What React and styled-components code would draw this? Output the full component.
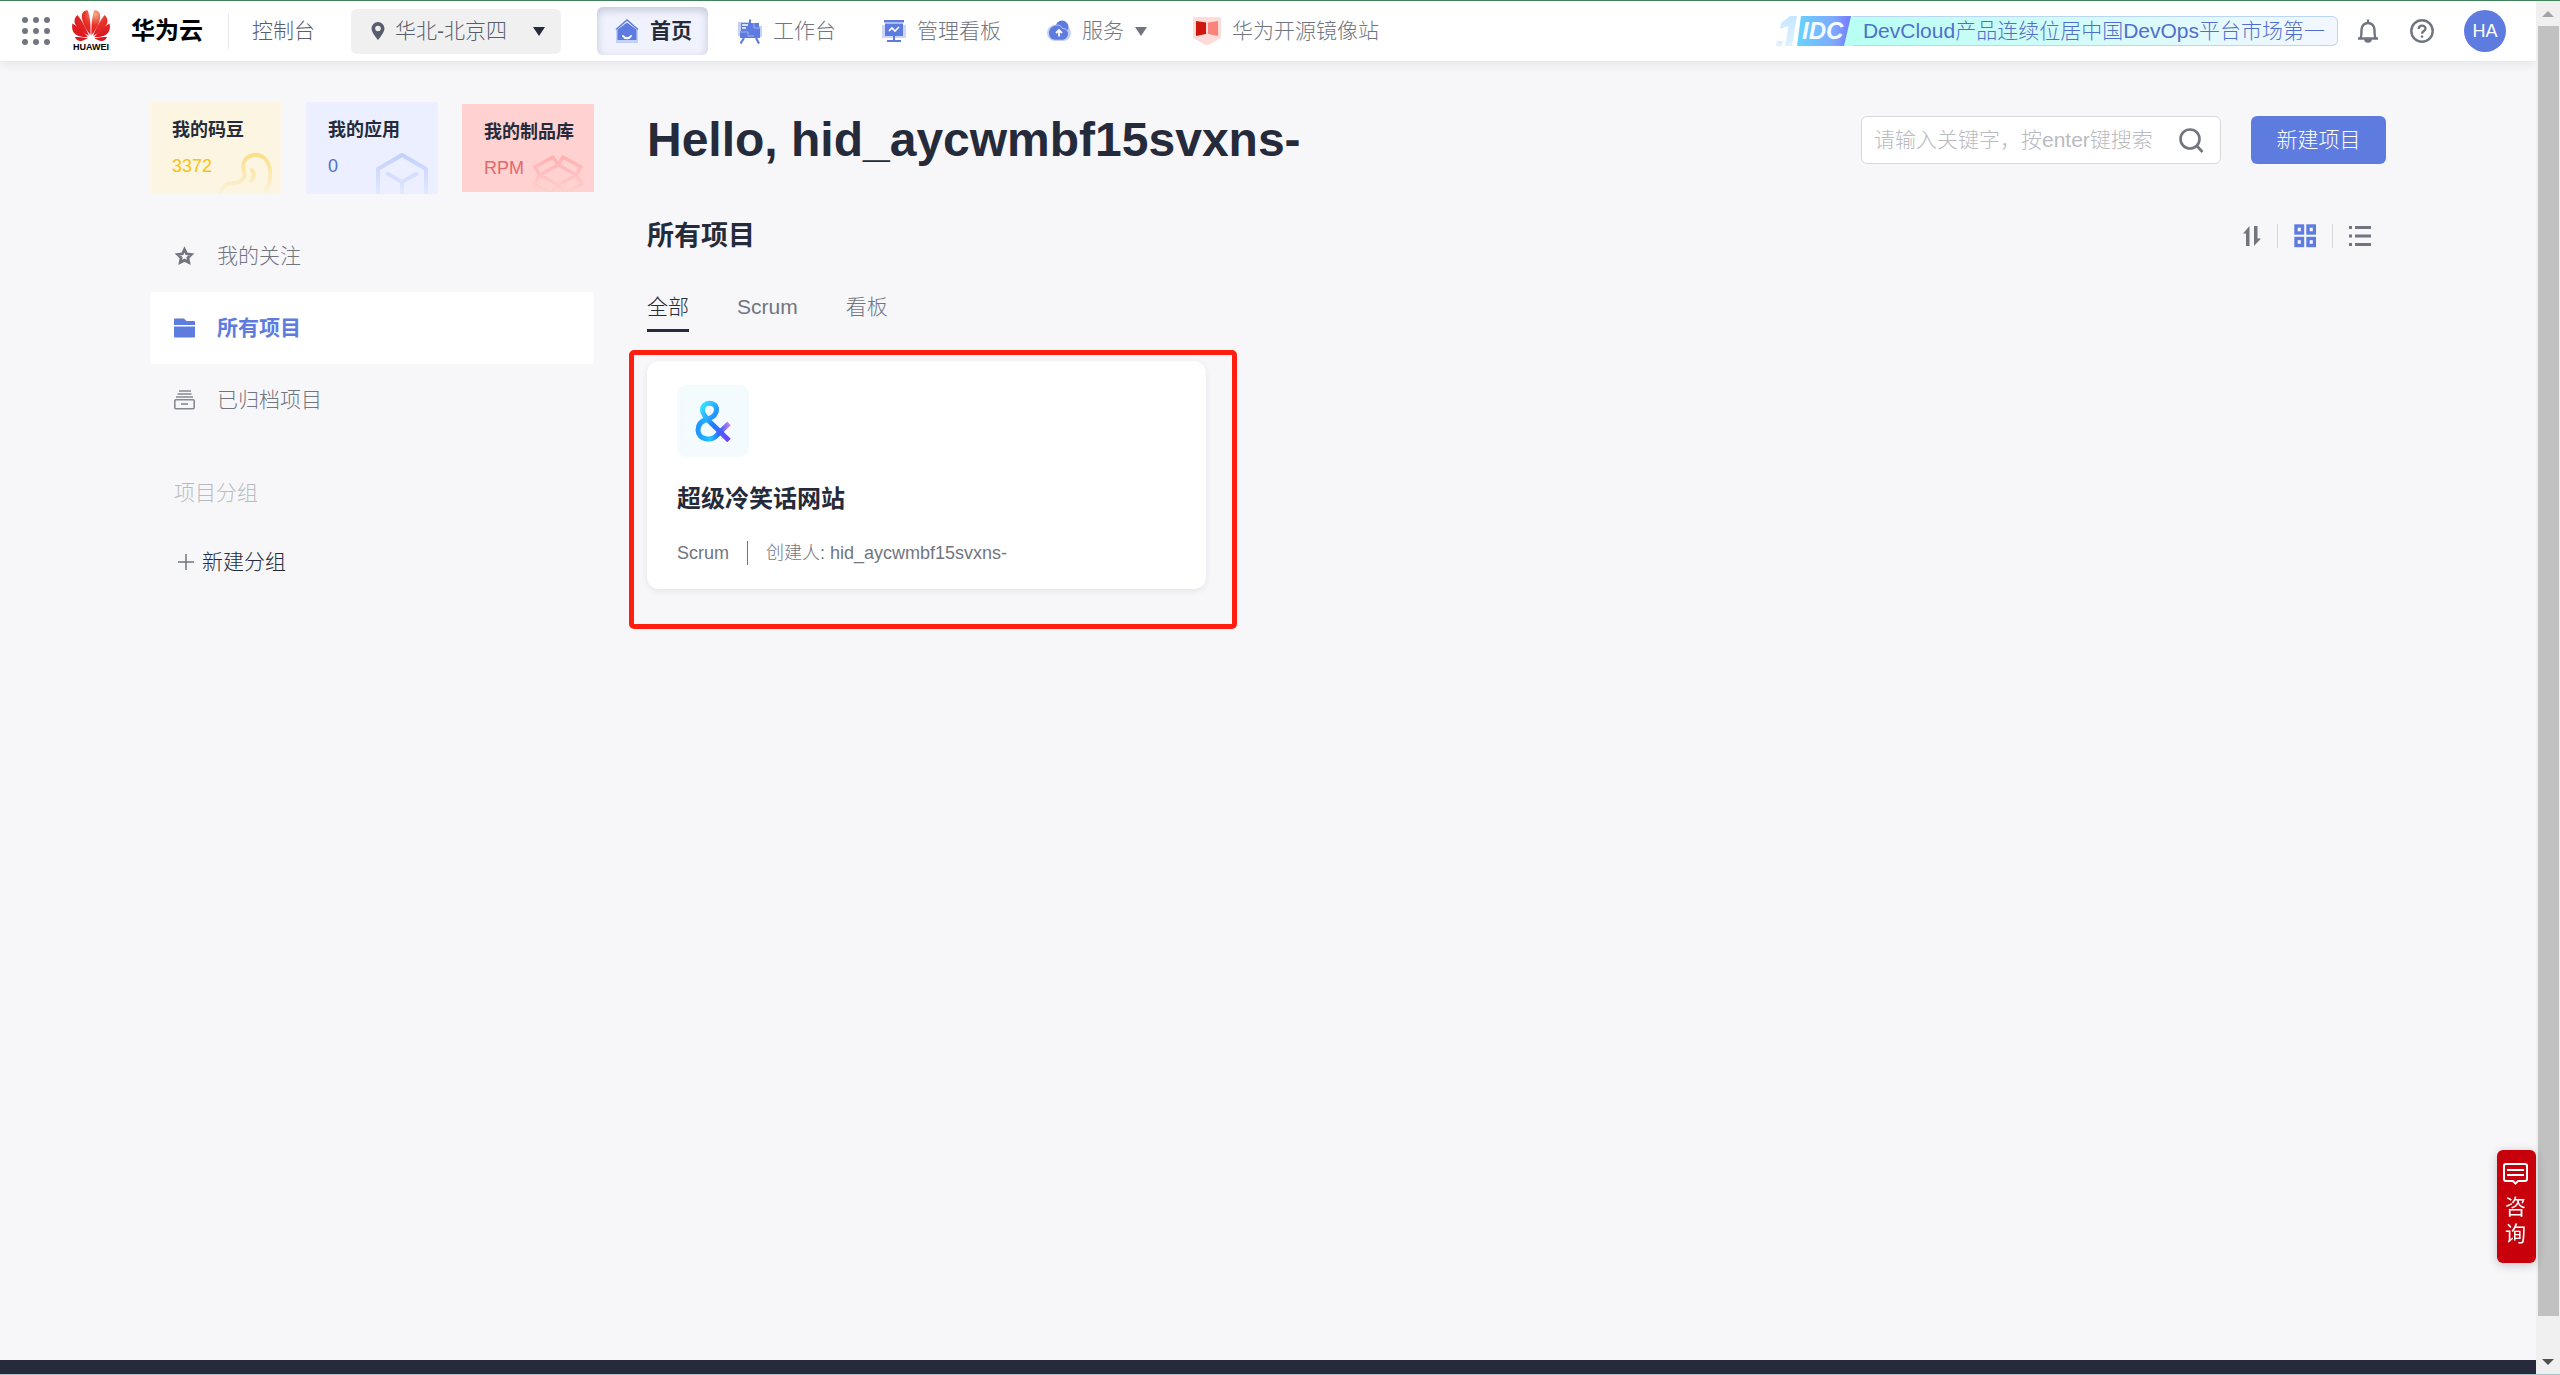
import React from "react";
import styled, { createGlobalStyle, css } from "styled-components";

const Global = createGlobalStyle`
  *, *::before, *::after { box-sizing: border-box; }
  body {
    margin: 0;
    background: #f7f7fa;
    color: #252b3a;
    font-family: "Liberation Sans", "Noto Sans CJK SC", sans-serif;
    font-size: 21px;
    font-weight: 300;
    line-height: 30px;
  }
  button, input, select { font: inherit; color: inherit; margin: 0; }
  button { border: 0; padding: 0; background: none; cursor: pointer; }
  a { color: inherit; text-decoration: none; }
  h1, h2, h3, p { margin: 0; }
  svg { display: block; flex: none; }
`;

const Shell = styled.div`
  display: flex;
  min-height: 100vh;
  border-top: 1px solid #43845c;
  border-bottom: 1px solid #a9c3c9;
`;

const Page = styled.div`
  flex: 1;
  min-width: 0;
  display: flex;
  flex-direction: column;
`;

const Footer = styled.footer`
  height: 14px;
  background: #252b3a;
`;

/* ---------- window scroll bar ---------- */
const Scrollbar = styled.div`
  width: 24px;
  display: flex;
  flex-direction: column;
  align-items: center;
  padding: 10px 0 9px;
  background: #f0f0f0;
`;
const Thumb = styled.div`
  width: 21px;
  flex: 1;
  margin: 9px 0 43px;
  background: #c1c1c1;
`;

/* ---------- top bar ---------- */
const TopBar = styled.header`
  height: 60px;
  display: flex;
  align-items: center;
  padding: 0 30px 0 22px;
  background: #fff;
  color: #71757f;
  box-shadow: 0 3px 10px rgba(37, 43, 58, 0.09);
`;
const IconButton = styled.button`
  display: flex;
  color: ${(p) => p.$color || "#71757f"};
`;
const Brand = styled.a`
  display: flex;
  align-items: center;
  gap: 20px;
  margin-left: 21px;
  padding-right: 25px;
  border-right: 1px solid #ebebeb;
  height: 36px;
  color: #000;
  font-size: 24px;
  font-weight: 700;
`;
const ConsoleLink = styled.a`
  margin: 0 36px 0 23px;
  color: #575d6c;
`;
const Region = styled.label`
  height: 45px;
  width: 210px;
  display: flex;
  align-items: center;
  gap: 10px;
  padding: 0 16px 0 20px;
  border-radius: 6px;
  background: #f0f0f1;
  color: #575d6c;
`;
const RegionSelect = styled.select`
  flex: 1;
  min-width: 0;
  appearance: none;
  border: 0;
  padding: 0;
  background: none;
  outline: 0;
`;
const Nav = styled.nav`
  display: flex;
  align-items: center;
  gap: 12px;
  margin-left: 36px;
`;
const NavItem = styled.a`
  height: 48px;
  display: flex;
  align-items: center;
  gap: 11px;
  padding: 0 16px 0 18px;
  border-radius: 6px;
  ${(p) =>
    p.$active &&
    css`
      background: #f0f3fd;
      box-shadow: inset 0 3px 9px rgba(60, 75, 110, 0.26);
      color: #252b3a;
      font-weight: 700;
    `}
`;
const Tools = styled.div`
  margin-left: auto;
  display: flex;
  align-items: center;
  gap: 30px;
`;
const Award = styled.a`
  display: flex;
  align-items: center;
  height: 30px;
  margin-right: -12px;
  color: #526ecc;
`;
const AwardText = styled.span`
  height: 30px;
  padding: 0 12px 0 10px;
  border: 1px solid #b9d6f2;
  border-left: 0;
  border-radius: 0 6px 6px 0;
  background: linear-gradient(90deg, #b8fff4, #f3f7ff);
  line-height: 28px;
  white-space: nowrap;
`;
const Avatar = styled.button`
  width: 42px;
  height: 42px;
  border-radius: 50%;
  background: #5e7ce0;
  color: #fff;
  font-size: 18px;
  text-align: center;
`;

/* ---------- body ---------- */
const Body = styled.div`
  flex: 1;
  display: flex;
  align-items: flex-start;
  gap: 53px;
  padding: 41px 150px 0;
`;
const Side = styled.aside`
  width: 444px;
  flex: none;
`;
const Stats = styled.div`
  display: flex;
  align-items: center;
  gap: 24px;
`;
const Stat = styled.a`
  flex: 1;
  height: ${(p) => p.$height}px;
  display: grid;
  grid-template-columns: auto 1fr;
  grid-template-rows: auto auto;
  align-content: start;
  row-gap: 10px;
  padding: 15px 0 0 22px;
  background: ${(p) => p.$bg};
  color: ${(p) => p.$color};
  font-size: 18px;
  line-height: 26px;
  overflow: hidden;
`;
const StatName = styled.span`
  grid-column: 1 / 3;
  color: #252b3a;
  font-weight: 700;
  white-space: nowrap;
`;
const StatArt = styled.span`
  justify-self: end;
  height: 26px;
  margin-right: 10px;
`;
const Menu = styled.nav`
  margin-top: 26px;
`;
const MenuItem = styled.a`
  height: 72px;
  display: flex;
  align-items: center;
  gap: 22px;
  padding-left: 24px;
  border-radius: 3px;
  color: #71757f;
  ${(p) =>
    p.$active &&
    css`
      background: #fff;
      color: #5e7ce0;
      font-weight: 700;
    `}
`;
const GroupTitle = styled.p`
  margin: 42px 0 0 24px;
  color: #babbc0;
`;
const AddGroup = styled.button`
  display: flex;
  align-items: center;
  gap: 8px;
  margin: 39px 0 0 28px;
`;

const Main = styled.main`
  flex: 1;
  min-width: 0;
  padding-top: 2px;
`;
const Row = styled.div`
  display: flex;
  align-items: center;
  justify-content: space-between;
`;
const Hello = styled.h1`
  font-size: 48px;
  line-height: 72px;
  font-weight: 700;
`;
const Actions = styled.div`
  display: flex;
  gap: 30px;
`;
const Search = styled.form`
  width: 360px;
  height: 48px;
  display: flex;
  align-items: center;
  padding: 0 16px 0 12px;
  border: 1px solid #d7d8da;
  border-radius: 6px;
  background: #fff;
`;
const SearchInput = styled.input`
  flex: 1;
  min-width: 0;
  border: 0;
  padding: 0;
  outline: 0;
  background: none;
  &::placeholder { color: #babbc0; opacity: 1; }
`;
const Primary = styled.button`
  width: 135px;
  height: 48px;
  border-radius: 6px;
  background: #5e7ce0;
  color: #fff;
`;
const Section = styled(Row)`
  margin-top: 40px;
`;
const SectionTitle = styled.h2`
  font-size: 27px;
  line-height: 40px;
  font-weight: 700;
`;
const Views = styled.div`
  display: flex;
  align-items: center;
  padding-right: 15px;
`;
const ViewButton = styled(IconButton)`
  height: 24px;
  align-items: center;
  & + & {
    margin-left: 16px;
    padding-left: 16px;
    border-left: 1px solid #d7d8da;
  }
`;
const Tabs = styled.div`
  display: flex;
  gap: 48px;
  margin-top: 34px;
`;
const Tab = styled.button`
  height: 42px;
  padding-bottom: 5px;
  border-bottom: 3px solid ${(p) => (p.$active ? "#252b3a" : "transparent")};
  color: ${(p) => (p.$active ? "#252b3a" : "#71757f")};
`;
const Cards = styled.div`
  display: grid;
  grid-template-columns: repeat(3, 1fr);
  gap: 31px;
  margin-top: 29px;
`;
const Highlighted = styled.div`
  position: relative;
`;
const Marker = styled.div`
  position: absolute;
  inset: -11px -31px -40px -18px;
  border: 5px solid #ff1e10;
  border-radius: 5px;
  pointer-events: none;
`;
const Card = styled.a`
  display: block;
  padding: 24px 30px;
  border-radius: 12px;
  background: #fff;
  box-shadow: 0 2px 6px rgba(37, 43, 58, 0.09);
`;
const CardLogo = styled.div`
  width: 72px;
  height: 72px;
  display: flex;
  align-items: center;
  justify-content: center;
  border-radius: 9px;
  background: #f3fbff;
`;
const CardTitle = styled.h3`
  margin-top: 24px;
  font-size: 24px;
  line-height: 36px;
  font-weight: 700;
`;
const Meta = styled.p`
  display: flex;
  align-items: center;
  margin-top: 24px;
  color: #71757f;
  font-size: 18px;
  line-height: 24px;
`;
const MetaPart = styled.span`
  & + & {
    margin-left: 18px;
    padding-left: 18px;
    border-left: 1px solid #71757f;
  }
`;
const Consult = styled.button`
  position: fixed;
  right: 24px;
  bottom: 112px;
  width: 39px;
  height: 113px;
  display: flex;
  flex-direction: column;
  align-items: center;
  padding: 13px 9px 0 7px;
  gap: 8px;
  border-radius: 6px;
  background: #c7000b;
  box-shadow: 0 2px 10px rgba(37, 43, 58, 0.25);
  color: #fff;
  font-weight: 400;
  line-height: 27px;
`;

/* ---------- drawings ---------- */
const Caret = ({ color }) => (
  <svg width="12" height="9" viewBox="0 0 12 9" aria-hidden="true">
    <path d="M0 0h12L6 9z" fill={color} />
  </svg>
);
const Dots = () => (
  <svg width="28" height="28" viewBox="0 0 28 28" fill="currentColor">
    {[3, 14, 25].map((y) => [3, 14, 25].map((x) => <circle key={x + "-" + y} cx={x} cy={y} r="3" />))}
  </svg>
);
const Huawei = () => (
  <svg width="40" height="44" viewBox="-1 -1 40 44">
    <defs>
      <radialGradient id="petal" gradientUnits="userSpaceOnUse" cx="23" cy="4" r="22">
        <stop offset="0" stopColor="#f7ab84" />
        <stop offset=".5" stopColor="#e8322a" />
        <stop offset="1" stopColor="#dd1a20" />
      </radialGradient>
    </defs>
    <g fill="url(#petal)">
      <path d="M18.500 25C18.900 17 18.300 6 15.500.3c-3.600.2-5.800 2.500-5.700 6.200C10.100 13 14 19.500 18.500 25z" />
      <path d="M19.500 25C19.100 17 19.700 6 22.500.3c3.600.2 5.800 2.500 5.700 6.200C27.900 13 24 19.500 19.500 25z" />
      <path d="M17 25.800C14.500 19 10 10.500 5.500 5 2.600 7.500 1.600 11.300 3.400 14.500 6 19.200 11 23 17 25.800z" />
      <path d="M21 25.800C23.500 19 28 10.500 32.500 5c2.900 2.500 3.900 6.300 2.100 9.500C32 19.200 27 23 21 25.800z" />
      <path d="M15.800 27C11.500 21.500 5.500 16.300.5 13.500c-1.200 4.500.1 8.700 3.200 10.900C7 26.600 11.300 27.300 15.800 27z" />
      <path d="M22.200 27C26.500 21.500 32.500 16.300 37.500 13.500c1.200 4.500-.1 8.700-3.200 10.900-3.300 2.200-7.600 2.900-12.100 2.600z" />
      <path d="M15.800 28.300c-4-1-9.300-1.300-12.900-1.300 1.300 2.900 3.700 4.300 6.300 3.900 2.400-.4 4.600-1.500 6.600-2.600z" />
      <path d="M22.200 28.300c4-1 9.300-1.300 12.900-1.300-1.300 2.900-3.700 4.300-6.300 3.900-2.400-.4-4.600-1.500-6.600-2.600z" />
    </g>
    <text x="19" y="40" textAnchor="middle" fontFamily="Liberation Sans, sans-serif" fontSize="9" fontWeight="700" fill="#000">HUAWEI</text>
  </svg>
);
const Pin = () => (
  <svg width="14" height="18" viewBox="0 0 14 18">
    <path fillRule="evenodd" fill="#575d6c" d="M7 0a6.500 6.500 0 0 1 6.500 6.500C13.500 10.500 7 18 7 18S.5 10.500.5 6.500A6.500 6.500 0 0 1 7 0zm0 3.700a2.800 2.800 0 1 0 0 5.600 2.800 2.800 0 0 0 0-5.600z" />
  </svg>
);
const HomeIcon = () => (
  <svg width="24" height="26" viewBox="0 0 24 26">
    <path d="M1 12h22v13H1z" fill="#c5d0f8" />
    <path d="M2.500 11.500 12 4.500l9.500 7V22h-19z" fill="#5e7ce0" />
    <path d="M1 11.500 12 2l11 9.500" fill="none" stroke="#5e7ce0" strokeWidth="1.600" />
    <path d="M8 18c1.800 3 6.200 3 8 0" fill="none" stroke="#fff" strokeWidth="2" strokeLinecap="round" />
  </svg>
);
const DeskIcon = () => (
  <svg width="24" height="26" viewBox="0 0 24 26">
    <path d="M0 4h12v14H0zM19 8h5v11h-5z" fill="#c5d0f8" />
    <path d="M11 1.500h2V5h8v4h1v11H2V13h1V5h8z" fill="#5e7ce0" />
    <path d="M6 20l-3.500 5.500M18 20l3 5.500" stroke="#5e7ce0" strokeWidth="2.200" />
    <path d="M4 7h6M4 10h4" stroke="#fff" strokeWidth="1.500" fill="none" />
    <path d="M16 5v5h6M2 14h8v4h6" stroke="#9fb2f1" strokeWidth="1" fill="none" />
  </svg>
);
const BoardIcon = () => (
  <svg width="24" height="24" viewBox="0 0 24 24">
    <path d="M0 6h24v13H0z" fill="#cdd7fa" />
    <path d="M2 1h20v2.500H2zM3 4.500h18v12.500H3z" fill="#5e7ce0" />
    <path d="M12 17v5M5 22h14" stroke="#5e7ce0" strokeWidth="2" />
    <path d="m7 12 3-3 3 3 4-4" stroke="#fff" strokeWidth="1.600" fill="none" />
  </svg>
);
const ServiceIcon = () => (
  <svg width="24" height="24" viewBox="0 0 24 24">
    <rect x="0" y="6" width="24" height="16" rx="8" fill="#c5d0f8" />
    <circle cx="15" cy="8" r="6.500" fill="#5e7ce0" />
    <path d="M9 6.500c3.500-.5 5.500 1.200 6.300 3.300 3.500-.3 5.700 2 5.700 5 0 3.400-2.700 6-6 6H8c-3.500 0-6-3-6-6.500 0-4.600 3-7.300 7-7.800z" fill="#5e7ce0" />
    <path d="M9 6c3.500-.3 5.500 1.400 6.300 3.500 2-.2 4 .5 5 2.500" stroke="#b4c3f6" strokeWidth="1" fill="none" />
    <path d="M12 17.500v-6M9 14l3-3 3 3" stroke="#fff" strokeWidth="1.800" fill="none" />
  </svg>
);
const MirrorIcon = () => (
  <svg width="28" height="28" viewBox="0 0 28 28">
    <path d="M1 0h26a1 1 0 0 1 1 1v20l-11 6.300q-3 1.400-6 0L0 21V1a1 1 0 0 1 1-1z" fill="#fddcda" />
    <path d="m3 4 10 1.500V17L3 19z" fill="#d0170f" />
    <path d="m25 4-10 1.500V17l10 2z" fill="#fb837b" />
  </svg>
);
const AwardMark = () => (
  <svg width="77" height="30" viewBox="0 0 77 30">
    <defs>
      <linearGradient id="idc">
        <stop offset="0" stopColor="#67d3ff" />
        <stop offset=".7" stopColor="#7fa8ff" />
        <stop offset="1" stopColor="#7278ff" />
      </linearGradient>
      <linearGradient id="one" x1="0" x2="0" y1="0" y2="1">
        <stop offset="0" stopColor="#c4e7ff" />
        <stop offset="1" stopColor="#e1f1ff" />
      </linearGradient>
    </defs>
    <path d="M72 0h5v30h-9z" fill="#b8fff4" />
    <path d="M14 0h7l-5 30H9l3.500-20L4 13l1-6zM1 25h6l-1 5H0z" fill="url(#one)" />
    <path d="M25 0h50l-7 30H21z" fill="url(#idc)" />
    <text x="26" y="23" fontFamily="Liberation Sans, sans-serif" fontSize="24" fontWeight="700" fontStyle="italic" fill="#f3fcff">IDC</text>
  </svg>
);
const Bell = () => (
  <svg width="24" height="24" viewBox="0 0 24 24" fill="none" stroke="currentColor" strokeWidth="2.400">
    <path d="M2 19.500h20M4.500 19c1-1.500 1-4 1-8.500a6.500 6.500 0 0 1 13 0c0 4.500 0 7 1 8.500M12 4V.5" />
    <path d="M9 20.500a3 2.500 0 0 0 6 0z" fill="currentColor" strokeWidth="1.500" />
  </svg>
);
const Help = () => (
  <svg width="24" height="24" viewBox="0 0 24 24" fill="none" stroke="currentColor" strokeWidth="2.400">
    <circle cx="12" cy="12" r="10.700" />
    <path d="M8.700 10c0-4.500 6.800-4.300 6.800-.4 0 2.400-3.500 2.400-3.500 5.200" />
    <path d="M12 16.500v2.200" />
  </svg>
);
const BeanArt = () => (
  <svg width="54" height="42" viewBox="0 0 54 42" fill="none" strokeWidth="4">
    <defs>
      <linearGradient id="bean" x1="0" x2="0" y1="0" y2="42" gradientUnits="userSpaceOnUse">
        <stop offset="0" stopColor="#fbdf86" />
        <stop offset="1" stopColor="#fbf4df" />
      </linearGradient>
    </defs>
    <path stroke="url(#bean)" d="M2 41c2-7 7-11 14-11 8 0 12-6 10-12C23 10 28 2 38 2c14 0 19 20 9 38" />
    <path stroke="url(#bean)" d="M34 17c3 4 2 8-1 11" strokeLinecap="round" />
  </svg>
);
const BoxArt = () => (
  <svg width="52" height="42" viewBox="0 0 52 42" fill="none" strokeWidth="4">
    <defs>
      <linearGradient id="cube" x1="0" x2="0" y1="0" y2="42" gradientUnits="userSpaceOnUse">
        <stop offset="0" stopColor="#c3cffa" />
        <stop offset="1" stopColor="#e3e9fe" />
      </linearGradient>
    </defs>
    <path stroke="url(#cube)" d="M2 46V16L26 2l24 14v30M12 21l14 8 14-8M26 29v17" strokeLinejoin="round" strokeLinecap="round" />
  </svg>
);
const PackArt = () => (
  <svg width="52" height="40" viewBox="0 0 52 40" fill="none" strokeWidth="3.500">
    <defs>
      <linearGradient id="pack" x1="0" x2="0" y1="0" y2="40" gradientUnits="userSpaceOnUse">
        <stop offset="0" stopColor="#fdb0b0" />
        <stop offset="1" stopColor="#ffd2d1" />
      </linearGradient>
    </defs>
    <path stroke="url(#pack)" d="M26 10 21 2 3 12l5 8 18-10 5-8 18 10-5 8zM8 20l18 10 18-10M8 20l-6 9 17 9 7-8 7 8 17-9-6-9" strokeLinejoin="round" />
  </svg>
);
const Star = () => (
  <svg width="21" height="20" viewBox="0 0 21 20">
    <path fill="none" stroke="#71757f" strokeWidth="2.800" d="m10.500 3.500 2.100 4.300 4.700.6-3.400 3.300.9 4.800-4.300-2.300-4.300 2.300.9-4.800L3.700 8.400l4.700-.6z" />
  </svg>
);
const Folder = () => (
  <svg width="21" height="20" viewBox="0 0 21 20" fill="#5e7ce0">
    <path d="M0 1.500A1 1 0 0 1 1 .5h9L12.500 3H20a1 1 0 0 1 1 1v3H0zM0 8.500h21v10a1 1 0 0 1-1 1H1a1 1 0 0 1-1-1z" />
  </svg>
);
const Archive = () => (
  <svg width="21" height="20" viewBox="0 0 21 20" fill="none" stroke="#858994" strokeWidth="1.600">
    <path d="M5 1h12M3.500 4h14M2 7h17" />
    <rect x=".8" y="9.800" width="19.400" height="9" rx="1" />
    <path d="M7 14h7" />
  </svg>
);
const Plus = () => (
  <svg width="16" height="16" viewBox="0 0 16 16" stroke="#71757f" strokeWidth="1.500">
    <path d="M8 0v16M0 8h16" />
  </svg>
);
const Lens = () => (
  <svg width="25" height="25" viewBox="0 0 25 25" fill="none" stroke="#71757f" strokeWidth="2.600">
    <circle cx="11" cy="11" r="9.500" />
    <path d="m17.500 17.500 6 6.500" />
  </svg>
);
const Sort = () => (
  <svg width="18" height="20" viewBox="0 0 18 20" fill="currentColor">
    <path d="M3 20V7.500H0L6.500 0v20zM11 0h3.500v12.500H18L11 20z" />
  </svg>
);
const GridIcon = () => (
  <svg width="22" height="24" viewBox="0 0 22 24" fill="none" stroke="currentColor" strokeWidth="3.400">
    {[2, 14.5].map((y) => [2, 14].map((x) => <rect key={x + "-" + y} x={x} y={y} width="6.500" height="7" />))}
  </svg>
);
const ListIcon = () => (
  <svg width="22" height="20" viewBox="0 0 22 20" stroke="currentColor" strokeWidth="3">
    <path d="M0 1.500h3M6 1.500h16M0 10h3M6 10h16M0 18.500h3M6 18.500h16" />
  </svg>
);
const Ampersand = () => (
  <svg width="38" height="42" viewBox="-1 0 38 42" fill="none" strokeWidth="5">
    <defs>
      <linearGradient id="ampA" x1="0" y1="0" x2="1" y2="1">
        <stop offset="0" stopColor="#38e5ff" />
        <stop offset=".5" stopColor="#1e7dff" />
        <stop offset="1" stopColor="#7a3cff" />
      </linearGradient>
      <linearGradient id="ampB" x1="0" y1="0" x2="1" y2="0">
        <stop offset="0" stopColor="#2196ff" />
        <stop offset=".4" stopColor="#22c4ff" />
        <stop offset=".7" stopColor="#2a62ff" />
        <stop offset="1" stopColor="#c478f0" />
      </linearGradient>
    </defs>
    <path stroke="url(#ampB)" d="M13 19C6 21 3 25 3 30c0 10 14 12 20 4l11-10.500" />
    <path stroke="url(#ampA)" d="M12.500 19.500c5-2 9-5 9-10 0-8.500-14-8.500-14 .5 0 4 3 7 6 10.500L34 40.500" />
  </svg>
);
const Chat = () => (
  <svg width="25" height="22" viewBox="0 0 25 22" fill="none" stroke="#fff" strokeWidth="2">
    <path d="M3 1h19a2 2 0 0 1 2 2v13a2 2 0 0 1-2 2h-7l-2.500 2.500L10 18H3a2 2 0 0 1-2-2V3a2 2 0 0 1 2-2zM4 7h17M4 12h17" />
  </svg>
);
const ArrowUp = () => (
  <svg width="12" height="6" viewBox="0 0 12 6"><path d="M6 0l6 6H0z" fill="#a3a3a3" /></svg>
);
const ArrowDown = () => (
  <svg width="12" height="6" viewBox="0 0 12 6"><path d="M0 0h12L6 6z" fill="#505050" /></svg>
);

const navItems = [
  { label: "首页", Icon: HomeIcon, active: true },
  { label: "工作台", Icon: DeskIcon },
  { label: "管理看板", Icon: BoardIcon },
  { label: "服务", Icon: ServiceIcon, more: true },
  { label: "华为开源镜像站", Icon: MirrorIcon },
];
const stats = [
  { name: "我的码豆", value: "3372", bg: "#fbf5e1", color: "#fac20a", height: 92, Art: BeanArt },
  { name: "我的应用", value: "0", bg: "#ebefff", color: "#526ecc", height: 92, Art: BoxArt },
  { name: "我的制品库", value: "RPM", bg: "#ffd2d1", color: "#e2696a", height: 88, Art: PackArt },
];
const menu = [
  { label: "我的关注", Icon: Star },
  { label: "所有项目", Icon: Folder, active: true },
  { label: "已归档项目", Icon: Archive },
];

export default function App() {
  return (
    <>
      <Global />
      <Shell>
        <Page>
          <TopBar>
            <IconButton aria-label="服务列表"><Dots /></IconButton>
            <Brand href="#home"><Huawei />华为云</Brand>
            <ConsoleLink href="#console">控制台</ConsoleLink>
            <Region>
              <Pin />
              <RegionSelect aria-label="区域" defaultValue="bj4">
                <option value="bj4">华北-北京四</option>
              </RegionSelect>
              <Caret color="#252b3a" />
            </Region>
            <Nav>
              {navItems.map(({ label, Icon, active, more }) => (
                <NavItem key={label} href="#nav" $active={active}>
                  <Icon />
                  {label}
                  {more && <Caret color="#71757f" />}
                </NavItem>
              ))}
            </Nav>
            <Tools>
              <Award href="#award">
                <AwardMark />
                <AwardText>DevCloud产品连续位居中国DevOps平台市场第一</AwardText>
              </Award>
              <IconButton aria-label="通知"><Bell /></IconButton>
              <IconButton aria-label="帮助"><Help /></IconButton>
              <Avatar>HA</Avatar>
            </Tools>
          </TopBar>

          <Body>
            <Side>
              <Stats>
                {stats.map(({ name, value, bg, color, height, Art }) => (
                  <Stat key={name} href="#stat" $bg={bg} $color={color} $height={height}>
                    <StatName>{name}</StatName>
                    <span>{value}</span>
                    <StatArt><Art /></StatArt>
                  </Stat>
                ))}
              </Stats>
              <Menu>
                {menu.map(({ label, Icon, active }) => (
                  <MenuItem key={label} href="#menu" $active={active}>
                    <Icon />
                    {label}
                  </MenuItem>
                ))}
              </Menu>
              <GroupTitle>项目分组</GroupTitle>
              <AddGroup><Plus />新建分组</AddGroup>
            </Side>

            <Main>
              <Row>
                <Hello>Hello, hid_aycwmbf15svxns-</Hello>
                <Actions>
                  <Search onSubmit={(e) => e.preventDefault()}>
                    <SearchInput aria-label="搜索项目" placeholder="请输入关键字，按enter键搜索" />
                    <IconButton aria-label="搜索"><Lens /></IconButton>
                  </Search>
                  <Primary>新建项目</Primary>
                </Actions>
              </Row>
              <Section>
                <SectionTitle>所有项目</SectionTitle>
                <Views>
                  <ViewButton aria-label="排序"><Sort /></ViewButton>
                  <ViewButton aria-label="卡片" $color="#5e7ce0"><GridIcon /></ViewButton>
                  <ViewButton aria-label="列表"><ListIcon /></ViewButton>
                </Views>
              </Section>
              <Tabs>
                <Tab $active>全部</Tab>
                <Tab>Scrum</Tab>
                <Tab>看板</Tab>
              </Tabs>
              <Cards>
                <Highlighted>
                  <Card href="#project">
                    <CardLogo><Ampersand /></CardLogo>
                    <CardTitle>超级冷笑话网站</CardTitle>
                    <Meta>
                      <MetaPart>Scrum</MetaPart>
                      <MetaPart>创建人: hid_aycwmbf15svxns-</MetaPart>
                    </Meta>
                  </Card>
                  <Marker />
                </Highlighted>
              </Cards>
            </Main>
          </Body>
          <Footer />
        </Page>
        <Scrollbar aria-hidden="true">
          <ArrowUp />
          <Thumb />
          <ArrowDown />
        </Scrollbar>
      </Shell>
      <Consult><Chat /><span>咨询</span></Consult>
    </>
  );
}
